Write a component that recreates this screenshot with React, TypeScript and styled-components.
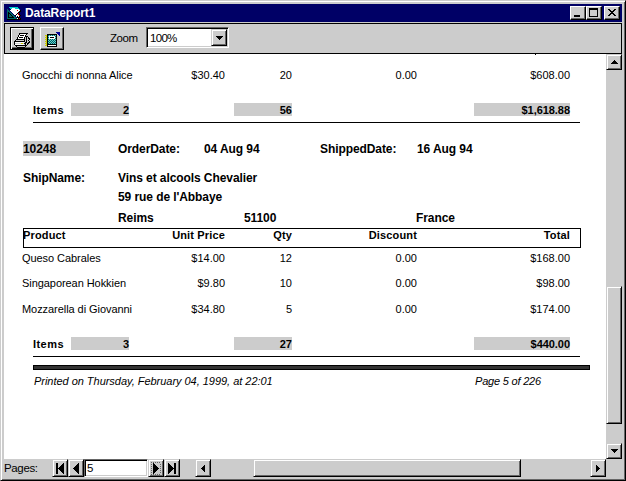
import React from 'react';
import styled, { createGlobalStyle, css } from 'styled-components';

const GlobalStyle = createGlobalStyle`
  html, body { margin: 0; padding: 0; overflow: hidden; }
  body { font-family: "Liberation Sans", Arial, sans-serif; font-size: 11px; color: #000; }
  *, *::before, *::after { box-sizing: border-box; }
  svg { display: block; shape-rendering: crispEdges; flex: none; }
`;

const raised = css`
  background: #ccc;
  border: 1px solid;
  border-color: #ccc #000 #000 #ccc;
  box-shadow: inset 1px 1px #fff, inset -1px -1px #666;
`;

const Window = styled.div`
  width: 626px;
  height: 481px;
  background: #ccc;
  border: 1px solid;
  border-color: #ccc #000 #000 #ccc;
  box-shadow: inset 1px 1px #fff, inset -1px -1px #666;
  padding: 3px;
  display: flex;
  flex-direction: column;
`;

const TitleBar = styled.header`
  height: 18px;
  flex: none;
  display: flex;
  align-items: center;
  background: #006;
  color: #fff;
  padding: 0 2px 0 3px;
`;

const Title = styled.h1`
  margin: 0 0 0 4px;
  flex: 1;
  font-size: 12px;
  font-weight: bold;
  line-height: 18px;
  letter-spacing: -0.1px;
`;

const TitleButton = styled.button<{ $gap?: boolean }>`
  ${raised}
  border-color: #fff #000 #000 #fff;
  box-shadow: inset -1px -1px #666;
  width: 16px;
  height: 14px;
  padding: 0;
  margin-left: ${p => (p.$gap ? 2 : 0)}px;
`;

const Toolbar = styled.div`
  height: 31px;
  flex: none;
  margin-top: 1px;
  border: 1px solid #000;
  display: flex;
  align-items: flex-start;
  padding: 3px 0 0 5px;
`;

const ToolButton = styled.button<{ $active?: boolean }>`
  width: 24px;
  height: 23px;
  padding: ${p => (p.$active ? '3px 0 0 3px' : '2px 0 0 4px')};
  margin-right: 6px;
  background: #ccc;
  border: 1px solid;
  border-color: ${p => (p.$active ? '#000' : '#fff #000 #000 #fff')};
  box-shadow: ${p => (p.$active ? 'inset 1px 1px #fff, inset -1px -1px #000, inset -2px -2px #666' : 'inset -1px -1px #666')};
`;

const ZoomLabel = styled.label`
  margin-left: 40px;
  width: 36px;
  line-height: 22px;
  font-size: 11.5px;
  letter-spacing: -0.45px;
`;

const Combo = styled.div`
  width: 83px;
  height: 21px;
  display: flex;
  background: #fff;
  border: 1px solid;
  border-color: #666 #fff #fff #666;
  box-shadow: inset 1px 1px #000, inset -1px -1px #ccc;
  padding: 1px;
`;

const ComboValue = styled.span`
  flex: 1;
  padding-left: 2px;
  line-height: 18px;
  font-size: 11.5px;
  letter-spacing: -0.7px;
`;

const ArrowButton = styled.button<{ $w?: number; $h?: number }>`
  ${raised}
  width: ${p => p.$w ?? 16}px;
  height: ${p => p.$h ?? 16}px;
  flex: none;
  padding: 0;
  display: flex;
  align-items: center;
  justify-content: center;
`;

const Main = styled.main`
  flex: none;
  height: 405px;
  display: flex;
`;

const Report = styled.section`
  width: 602px;
  background: #fff;
  overflow: hidden;
  display: flex;
  flex-direction: column;
`;

const VScroll = styled.div`
  width: 16px;
  display: flex;
  flex-direction: column;
`;

const VThumb = styled.div`
  ${raised}
  height: 138px;
  margin: 216px 0 19px;
`;

const Clipped = styled.div`
  width: 1px;
  height: 1px;
  flex: none;
  margin-left: 531px;
  background: #000;
`;

const ProductRow = styled.div<{ $top: number; $bold?: boolean }>`
  margin: ${p => p.$top}px 0 0 18px;
  height: 14px;
  flex: none;
  line-height: 14px;
  display: grid;
  grid-template-columns: 112px 91px 67px 125px 153px;
  text-align: right;
  white-space: nowrap;
  font-weight: ${p => (p.$bold ? 'bold' : 'normal')};
  letter-spacing: ${p => (p.$bold ? 0.15 : 0)}px;
  & > :first-child { text-align: left; letter-spacing: ${p => (p.$bold ? 0.15 : -0.06)}px; }
`;

const HeaderFrame = styled.div`
  width: 558px;
  height: 20px;
  flex: none;
  margin: 3px 0 0 19px;
  border: 1px solid #000;
  ${ProductRow} { margin: -1px 0 0 -2px; }
  ${ProductRow} > :first-child { padding-left: 1px; }
`;

const Totals = styled.div<{ $top: number }>`
  margin: ${p => p.$top}px 0 0 29px;
  width: 547px;
  height: 20px;
  flex: none;
  border-bottom: 1px solid #000;
  display: grid;
  grid-template-columns: 38px 58px 105px 58px 182px 96px;
  font-weight: bold;
  line-height: 14px;
`;

const TotalsLabel = styled.span`
  letter-spacing: 0.45px;
`;

const Shade = styled.span<{ $col: number; $tight?: boolean }>`
  grid-column: ${p => p.$col};
  height: 13px;
  background: #ccc;
  text-align: right;
  letter-spacing: ${p => (p.$tight ? -0.05 : 0)}px;
`;

const OrderRow = styled.div<{ $top: number; $cols: string }>`
  margin: ${p => p.$top}px 0 0 19px;
  height: 15px;
  flex: none;
  display: grid;
  grid-template-columns: ${p => p.$cols};
  font-size: 12px;
  font-weight: bold;
  line-height: 16px;
  letter-spacing: -0.08px;
  white-space: nowrap;
`;

const OrderId = styled.span`
  width: 67px;
  height: 15px;
  background: #ccc;
`;

const Divider = styled.div`
  margin: 8px 0 0 29px;
  width: 557px;
  height: 5px;
  flex: none;
  background: #333;
  border: 1px solid #000;
`;

const Footer = styled.footer`
  margin: 4px 0 0 30px;
  display: grid;
  grid-template-columns: 441px 100px;
  font-style: italic;
  line-height: 14px;
  letter-spacing: -0.03px;
  white-space: nowrap;
`;

const PageNumber = styled.span`
  letter-spacing: -0.2px;
`;

const PageBar = styled.nav`
  height: 18px;
  display: flex;
`;

const PagesLabel = styled.span`
  width: 48px;
  font-size: 11.5px;
  line-height: 18px;
  letter-spacing: -0.35px;
`;

const PageField = styled.input`
  width: 64px;
  height: 18px;
  padding: 0 2px;
  outline: 0;
  border: 1px solid;
  border-color: #666 #fff #fff #666;
  box-shadow: inset 1px 1px #000, inset -1px -1px #ccc;
  font: 11.5px "Liberation Sans", Arial, sans-serif;
`;

const HScroll = styled.div`
  margin-left: 15px;
  width: 411px;
  display: flex;
`;

const HThumb = styled.div`
  ${raised}
  width: 268px;
  height: 18px;
  margin: 0 69px 0 42px;
`;

const palette: Record<string, string> = {
  k: '#000', w: '#fff', g: '#666', l: '#ccc', t: '#006666', c: '#00cccc',
  b: '#000099', r: '#c00', y: '#cc0', a: '#66cccc',
};

function Pixels({ rows }: { rows: string[] }) {
  return (
    <svg width={rows[0].length} height={rows.length}>
      {rows.flatMap((row, y) =>
        [...row].map((c, x) =>
          palette[c] ? <rect key={`${x}-${y}`} x={x} y={y} width="1" height="1" fill={palette[c]} /> : null,
        ),
      )}
    </svg>
  );
}

const reportIcon = [
  '..ccccccccc...',
  '...ccwwwcccc..',
  't...wwwwwwwwc.',
  'tt.wwwwwwwrwwk',
  'ttt.wwwwwwwwkk',
  'tktt.wwwwwwkk.',
  'tkktt.wwwwkr..',
  'tktktt.wwkwrk.',
  'tkttktt.kwwwrk',
  'tktttktt.wkwk.',
  'tkkkkkktt.kkk.',
  'ttttttttttwkrk',
  'kkkkkkkkkkkkkk',
];

const printerIcon = [
  '.....kkkkkkkkk..',
  '.....kwwwwwwk...',
  '....kwkkkkwk....',
  '....kwwwwwwkkk..',
  '...kwkkkkwklklk.',
  '...kwwwwwwklklkk',
  '..kkkkkkkkklkllk',
  '.kllllllllklklk.',
  'kkkkkkkkkkklkllk',
  'kwwwwwwwwwlkklkk',
  'kllllllyylkklkk.',
  'kwwwwwwwwwlklk..',
  '.kkkkkkkkkkkk...',
  '..kllllllllk....',
  '...kkkkkkkk.....',
];

const bookIcon = [
  '...........bbbb',
  '............bbb',
  '..kkkkkkkkkk.bb',
  'yyktatatatak..b',
  '.ykawwwwwwtk...',
  'yyktwkkkkwak...',
  '.ykawwwwwwtk...',
  'yyktatatatak...',
  '.ykatatatatk...',
  'yyktatatatak...',
  '.ykatatatatk...',
  'yyktatatatak...',
  '.ykkkkkkkkkk...',
  'yykwwwwwwwwk...',
  '..kkkkkkkkkk...',
];

const down = ['kkkkkkk', '.kkkkk.', '..kkk..', '...k...'];
const up = [...down].reverse();
const left = ['...k', '..kk', '.kkk', 'kkkk', '.kkk', '..kk', '...k'];
const right = left.map(r => [...r].reverse().join(''));
const prev = ['.....k', '....kk', '...kkk', '..kkkk', '.kkkkk', 'kkkkkk', '.kkkkk', '..kkkk', '...kkk', '....kk', '.....k'];
const next = prev.map(r => [...r].reverse().join(''));
const first = prev.map(r => 'kk' + r);
const last = next.map(r => r + 'kk');
const focusedNext = next.map((r, i) => (i % 2 ? 'g.' : '..') + r + (i % 2 ? '.g' : '..'));
focusedNext.unshift('g.g.g.g.g.');
focusedNext.push('g.g.g.g.g.');

const products = [
  { top: 3, cells: ['Queso Cabrales', '$14.00', '12', '0.00', '$168.00'] },
  { top: 11, cells: ['Singaporean Hokkien', '$9.80', '10', '0.00', '$98.00'] },
  { top: 12, cells: ['Mozzarella di Giovanni', '$34.80', '5', '0.00', '$174.00'] },
];

function Product({ top, cells, bold }: { top: number; cells: string[]; bold?: boolean }) {
  return (
    <ProductRow $top={top} $bold={bold}>
      {cells.map((c, i) => <span key={i}>{c}</span>)}
    </ProductRow>
  );
}

function TotalsRow({ top, count, qty, sum }: { top: number; count: string; qty: string; sum: string }) {
  return (
    <Totals $top={top}>
      <TotalsLabel>Items</TotalsLabel>
      <Shade $col={2}>{count}</Shade>
      <Shade $col={4}>{qty}</Shade>
      <Shade $col={6} $tight>{sum}</Shade>
    </Totals>
  );
}

export default function App() {
  return (
    <>
      <GlobalStyle />
      <Window>
        <TitleBar>
          <Pixels rows={reportIcon} />
          <Title>DataReport1</Title>
          <TitleButton aria-label="Minimize">
            <svg width="14" height="12"><path d="M3 8h6v2H3z" /></svg>
          </TitleButton>
          <TitleButton aria-label="Maximize">
            <svg width="14" height="12"><path d="M2 1h9v9H2zM3 3v6h7V3z" fillRule="evenodd" /></svg>
          </TitleButton>
          <TitleButton aria-label="Close" $gap>
            <svg width="14" height="12"><path d="M3 2h2v1h1v1h2V3h1V2h2v1h-1v1H9v1H8v1h1v1h1v1h1v1H9V8H8V7H6v1H5v1H3V8h1V7h1V6h1V5H5V4H4V3H3z" /></svg>
          </TitleButton>
        </TitleBar>
        <Toolbar>
          <ToolButton $active aria-label="Print"><Pixels rows={printerIcon} /></ToolButton>
          <ToolButton aria-label="Export"><Pixels rows={bookIcon} /></ToolButton>
          <ZoomLabel>Zoom</ZoomLabel>
          <Combo>
            <ComboValue>100%</ComboValue>
            <ArrowButton $h={17} aria-label="Open"><Pixels rows={down} /></ArrowButton>
          </Combo>
        </Toolbar>
        <Main>
          <Report>
            <Clipped />
            <Product top={13} cells={['Gnocchi di nonna Alice', '$30.40', '20', '0.00', '$608.00']} />
            <TotalsRow top={21} count="2" qty="56" sum="$1,618.88" />
            <OrderRow $top={18} $cols="95px 86px 116px 97px auto">
              <OrderId>10248</OrderId>
              <span>OrderDate:</span>
              <span>04 Aug 94</span>
              <span>ShippedDate:</span>
              <span>16 Aug 94</span>
            </OrderRow>
            <OrderRow $top={14} $cols="95px auto">
              <span>ShipName:</span>
              <span>Vins et alcools Chevalier</span>
            </OrderRow>
            <OrderRow $top={4} $cols="95px auto">
              <span />
              <span>59 rue de l'Abbaye</span>
            </OrderRow>
            <OrderRow $top={6} $cols="95px 126px 172px auto">
              <span />
              <span>Reims</span>
              <span>51100</span>
              <span>France</span>
            </OrderRow>
            <HeaderFrame>
              <Product top={0} bold cells={['Product', 'Unit Price', 'Qty', 'Discount', 'Total']} />
            </HeaderFrame>
            {products.map(p => <Product key={p.cells[0]} {...p} />)}
            <TotalsRow top={21} count="3" qty="27" sum="$440.00" />
            <Divider />
            <Footer>
              <span>Printed on Thursday, February 04, 1999, at 22:01</span>
              <PageNumber>Page 5 of 226</PageNumber>
            </Footer>
          </Report>
          <VScroll>
            <ArrowButton aria-label="Scroll up"><Pixels rows={up} /></ArrowButton>
            <VThumb />
            <ArrowButton aria-label="Scroll down"><Pixels rows={down} /></ArrowButton>
          </VScroll>
        </Main>
        <PageBar>
          <PagesLabel>Pages:</PagesLabel>
          <ArrowButton $h={18} aria-label="First page"><Pixels rows={first} /></ArrowButton>
          <ArrowButton $h={18} aria-label="Previous page"><Pixels rows={prev} /></ArrowButton>
          <PageField defaultValue="5" />
          <ArrowButton $h={18} aria-label="Next page"><Pixels rows={focusedNext} /></ArrowButton>
          <ArrowButton $h={18} aria-label="Last page"><Pixels rows={last} /></ArrowButton>
          <HScroll>
            <ArrowButton $h={18} aria-label="Scroll left"><Pixels rows={left} /></ArrowButton>
            <HThumb />
            <ArrowButton $h={18} aria-label="Scroll right"><Pixels rows={right} /></ArrowButton>
          </HScroll>
        </PageBar>
      </Window>
    </>
  );
}
